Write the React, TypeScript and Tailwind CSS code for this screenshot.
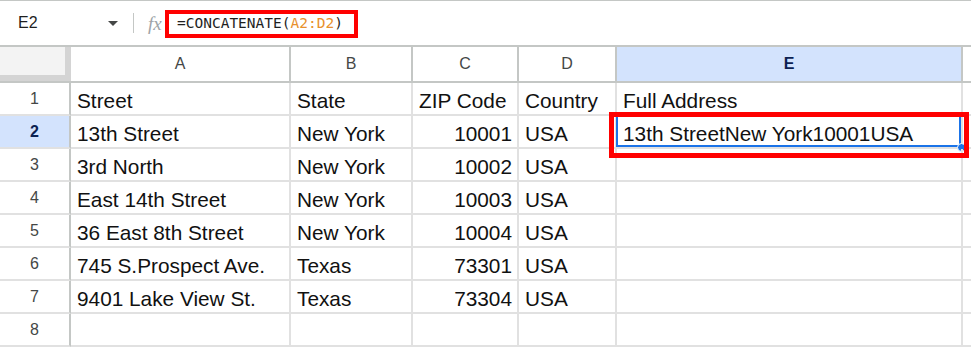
import React from "react";

const colWidths = [220, 122, 106, 98, 346];
const colLetters = ["A", "B", "C", "D", "E"];

const rows: (string | null)[][] = [
    ["Street", "State", "ZIP Code", "Country", "Full Address"],
    ["13th Street", "New York", "10001", "USA", "13th StreetNew York10001USA"],
    ["3rd North", "New York", "10002", "USA", ""],
    ["East 14th Street", "New York", "10003", "USA", ""],
    ["36 East 8th Street", "New York", "10004", "USA", ""],
    ["745 S.Prospect Ave.", "Texas", "73301", "USA", ""],
    ["9401 Lake View St.", "Texas", "73304", "USA", ""],
    ["", "", "", "", ""],
];

function isNumber(v: string | null) {
    return !!v && /^\d+$/.test(v);
}

export default function App() {
    return (
        <div className="relative w-[971px] h-[347px] overflow-hidden bg-white font-['Liberation_Sans',Arial,sans-serif]">
            {/* Formula bar */}
            <div className="flex items-center h-[45px] border-t border-[#c4c7c5]">
                <div className="flex items-center w-[133px] h-full pl-[18px] pr-[15px]">
                    <span className="text-[16px] text-[#1f1f1f]">E2</span>
                    <svg className="ml-auto" width="10" height="5" viewBox="0 0 10 5">
                        <path d="M0 0 L10 0 L5 5 Z" fill="#444746" />
                    </svg>
                </div>
                <div className="w-px h-[20px] bg-[#c4c7c5]" />
                <span className="ml-[14px] w-[17px] text-[19px] italic text-[#a0a4a8] font-['Liberation_Serif',serif] leading-none">
                    fx
                </span>
                <div className="flex items-center h-[28px] mt-[2px] border-[4px] border-[#f00] pl-[8px] pr-[11px] font-['DejaVu_Sans_Mono',monospace] text-[14.5px] text-[#1f1f1f]">
                    <span>=CONCATENATE(</span>
                    <span className="text-[#e8912d]">A2:D2</span>
                    <span>)</span>
                </div>
            </div>

            {/* Column headers */}
            <div className="flex h-[38px] border-t-2 border-b-2 border-[#c4c7c5]">
                <div className="w-[71px] shrink-0 flex border-r-[6px] border-[#d4d4d4]">
                    <div className="flex-1 bg-[#f3f3f3] border-b-[6px] border-[#d4d4d4]" />
                </div>
                {colLetters.map((l, i) => (
                    <div
                        key={l}
                        style={{ width: colWidths[i] }}
                        className={`shrink-0 flex items-center justify-center border-r-2 border-[#c4c7c5] text-[16px] ${
                            l === "E" ? "bg-[#d3e3fd] font-bold text-[#0b2152]" : "text-[#444746]"
                        }`}
                    >
                        {l}
                    </div>
                ))}
                <div className="flex-1" />
            </div>

            {/* Rows */}
            {rows.map((r, ri) => {
                const selectedRow = ri === 1;
                return (
                    <div key={ri} className="flex h-[33px]">
                        <div
                            className={`w-[71px] shrink-0 flex items-center justify-center pt-[1px] border-r-2 border-b-2 border-r-[#c4c7c5] border-b-[#e1e1e1] text-[16px] ${
                                selectedRow ? "bg-[#d3e3fd] font-bold text-[#0b2152]" : "text-[#444746]"
                            }`}
                        >
                            {ri + 1}
                        </div>
                        {r.map((v, ci) => (
                            <div
                                key={ci}
                                style={{ width: colWidths[ci] }}
                                className={`relative shrink-0 flex items-center pt-[4px] border-r-2 border-b-2 border-[#e1e1e1] text-[20.8px] text-[#111] whitespace-nowrap ${
                                    isNumber(v) ? "justify-end pr-[5px]" : "pl-[6px]"
                                }`}
                            >
                                {v}
                                {selectedRow && ci === 4 && (
                                    <>
                                        <div className="absolute -left-px -top-px right-0 bottom-0 border-2 border-[#1a73e8]" />
                                        <div className="absolute -right-[5px] -bottom-[5px] w-[9px] h-[9px] rounded-full bg-[#1a73e8] border border-white" />
                                    </>
                                )}
                            </div>
                        ))}
                        <div className="flex-1 border-b-2 border-[#e1e1e1]" />
                    </div>
                );
            })}

            {/* Annotation box around E2 */}
            <div className="absolute left-[609px] top-[112px] w-[360px] h-[46px] border-[5px] border-[#f00]" />
        </div>
    );
}
